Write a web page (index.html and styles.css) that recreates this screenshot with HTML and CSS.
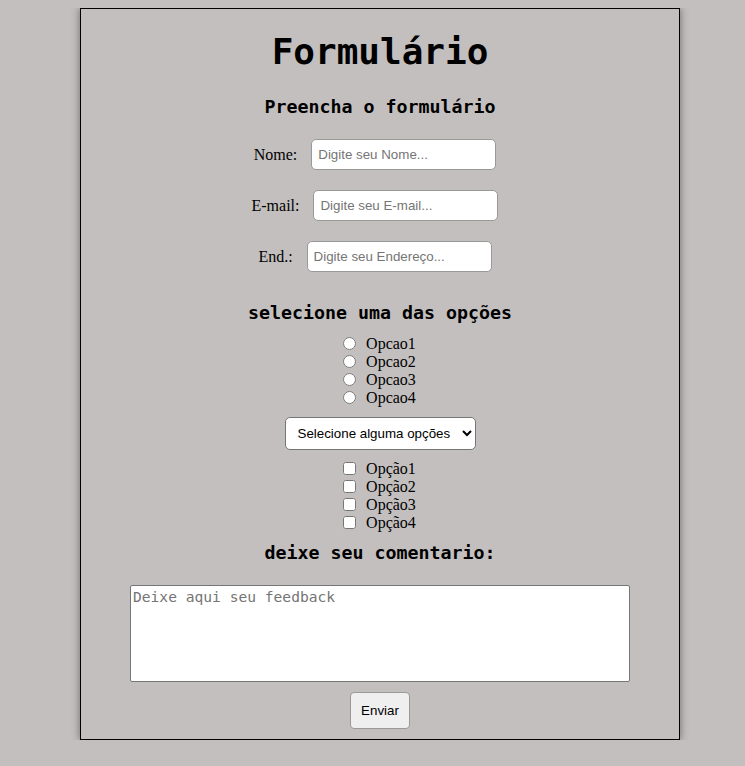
FILE: index.html
```html
<!DOCTYPE html>
<html lang="pt-BR">
<head>
    <meta charset="UTF-8">
    <meta name="viewport" content="width=device-width, initial-scale=1.0">
    <title>Formulário</title>
    <link rel="stylesheet" href="styles.css">
</head>
<body>

<main class="container">
    <h1>Formulário</h1>
    <h2>Preencha o formulário</h2>

    <form class="form">
        <div class="row">
            <label for="nome">Nome:</label>
            <input type="text" id="nome" name="nome" placeholder="Digite seu Nome...">
        </div>
        <div class="row">
            <label for="email">E-mail:</label>
            <input type="text" id="email" name="email" placeholder="Digite seu E-mail...">
        </div>
        <div class="row">
            <label for="end">End.:</label>
            <input type="text" id="end" name="end" placeholder="Digite seu Endereço...">
        </div>

        <h3 class="section-title">selecione uma das opções</h3>
        <div class="choices">
            <label><input type="radio" name="opcao" value="1"> Opcao1</label>
            <label><input type="radio" name="opcao" value="2"> Opcao2</label>
            <label><input type="radio" name="opcao" value="3"> Opcao3</label>
            <label><input type="radio" name="opcao" value="4"> Opcao4</label>
        </div>

        <select class="select" name="lista">
            <option>Selecione alguma opções</option>
            <option>Opção 1</option>
            <option>Opção 2</option>
        </select>

        <div class="choices checks">
            <label><input type="checkbox" name="c1"> Opção1</label>
            <label><input type="checkbox" name="c2"> Opção2</label>
            <label><input type="checkbox" name="c3"> Opção3</label>
            <label><input type="checkbox" name="c4"> Opção4</label>
        </div>

        <h3 class="section-title comment-title">deixe seu comentario:</h3>
        <textarea class="feedback" name="feedback" placeholder="Deixe aqui seu feedback"></textarea>

        <button type="submit" class="send">Enviar</button>
    </form>
</main>

</body>
</html>
```

FILE: styles.css
```css
body {
    margin: 8px 0 0 15px;
    background-color: #c3bfbe;
    font-family: "Liberation Serif", serif;
    font-size: 16px;
}
.container {
    width: 598px;
    margin: 0 auto;
    border: 1px solid #000;
    box-shadow: 0 0 8px rgba(0, 0, 0, 0.45);
    text-align: center;
    padding-bottom: 10px;
}
h1, h2, h3 {
    font-family: "DejaVu Sans Mono", monospace;
    font-weight: bold;
    color: #000;
}
h1 {
    font-size: 36px;
    line-height: 42px;
    margin: 22px 0 0;
}
h2 {
    font-size: 18.3px;
    line-height: 22px;
    margin: 23px 0 0;
}
.form {
    display: flex;
    flex-direction: column;
    align-items: center;
}
.row {
    display: flex;
    align-items: center;
    gap: 14px;
    padding-right: 10px;
    margin-top: 20px;
}
.row:first-child {
    margin-top: 21px;
}
.row input {
    width: 185px;
    height: 31px;
    box-sizing: border-box;
    padding: 0 6px;
    border: 1px solid #999;
    border-radius: 5px;
    font-family: "Liberation Sans", Arial, sans-serif;
    font-size: 13.33px;
    background: #fff;
}
.row input::placeholder {
    color: #757575;
}
.section-title {
    font-size: 18.3px;
    line-height: 22px;
    margin: 30px 0 0;
}
.choices {
    display: flex;
    flex-direction: column;
    align-items: flex-start;
    margin-top: 10px;
    line-height: 18px;
    padding-right: 6px;
}
.choices label {
    height: 18px;
}
.choices input {
    margin: 3px 6px 0 5px;
    width: 13px;
    height: 13px;
    vertical-align: -1px;
}
.select {
    margin-top: 11px;
    width: 191px;
    height: 33px;
    padding: 0 4px 0 8px;
    border: 1px solid #767676;
    border-radius: 5px;
    background: #fff;
    font-family: "Liberation Sans", Arial, sans-serif;
    font-size: 13.33px;
    color: #000;
}
.checks {
    margin-top: 9px;
}
.comment-title {
    margin-top: 11px;
}
.feedback {
    display: block;
    width: 500px;
    height: 97px;
    box-sizing: border-box;
    margin-top: 21px;
    padding: 2px;
    border: 1px solid #767676;
    border-radius: 2px;
    resize: none;
    font-family: "DejaVu Sans Mono", monospace;
    font-size: 14.6px;
}
.feedback::placeholder {
    color: #757575;
}
.send {
    margin-top: 10px;
    padding: 0;
    width: 60px;
    height: 37px;
    background-color: #efefef;
    border: 1px solid #999;
    border-radius: 4px;
    font-family: "Liberation Sans", Arial, sans-serif;
    font-size: 13.33px;
    color: #000;
    cursor: pointer;
}
```
